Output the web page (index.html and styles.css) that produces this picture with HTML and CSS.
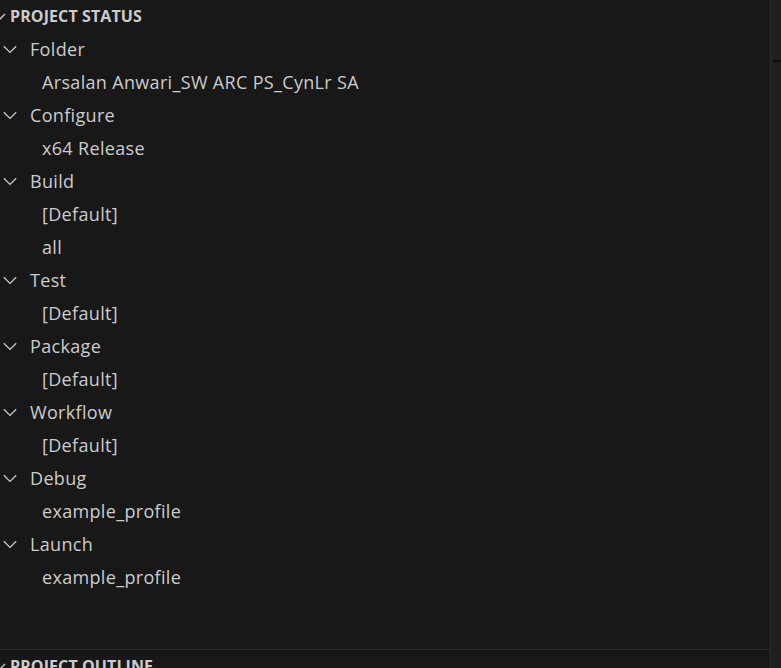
FILE: index.html
```html
<!DOCTYPE html>
<html>
<head>
<meta charset="utf-8">
<link rel="stylesheet" href="styles.css">
</head>
<body>
<div class="shell">
  <div class="sidebar">
    <div class="section">
      <div class="header">
        <svg class="hchev" width="16" height="16" viewBox="0 0 16 16"><path d="M3 6l5 5 5-5" fill="none" stroke="#cccccc" stroke-width="1.4"/></svg>
        <span>PROJECT STATUS</span>
      </div>
      <div class="tree">
        <div class="row parent"><svg class="chev" width="18" height="18" viewBox="0 0 16 16"><path d="M2.5 5.5l5.5 5.5 5.5-5.5" fill="none" stroke="#cccccc" stroke-width="1.1"/></svg><span>Folder</span></div>
        <div class="row leaf">Arsalan Anwari_SW ARC PS_CynLr SA</div>
        <div class="row parent"><svg class="chev" width="18" height="18" viewBox="0 0 16 16"><path d="M2.5 5.5l5.5 5.5 5.5-5.5" fill="none" stroke="#cccccc" stroke-width="1.1"/></svg><span>Configure</span></div>
        <div class="row leaf">x64 Release</div>
        <div class="row parent"><svg class="chev" width="18" height="18" viewBox="0 0 16 16"><path d="M2.5 5.5l5.5 5.5 5.5-5.5" fill="none" stroke="#cccccc" stroke-width="1.1"/></svg><span>Build</span></div>
        <div class="row leaf">[Default]</div>
        <div class="row leaf">all</div>
        <div class="row parent"><svg class="chev" width="18" height="18" viewBox="0 0 16 16"><path d="M2.5 5.5l5.5 5.5 5.5-5.5" fill="none" stroke="#cccccc" stroke-width="1.1"/></svg><span>Test</span></div>
        <div class="row leaf">[Default]</div>
        <div class="row parent"><svg class="chev" width="18" height="18" viewBox="0 0 16 16"><path d="M2.5 5.5l5.5 5.5 5.5-5.5" fill="none" stroke="#cccccc" stroke-width="1.1"/></svg><span>Package</span></div>
        <div class="row leaf">[Default]</div>
        <div class="row parent"><svg class="chev" width="18" height="18" viewBox="0 0 16 16"><path d="M2.5 5.5l5.5 5.5 5.5-5.5" fill="none" stroke="#cccccc" stroke-width="1.1"/></svg><span>Workflow</span></div>
        <div class="row leaf">[Default]</div>
        <div class="row parent"><svg class="chev" width="18" height="18" viewBox="0 0 16 16"><path d="M2.5 5.5l5.5 5.5 5.5-5.5" fill="none" stroke="#cccccc" stroke-width="1.1"/></svg><span>Debug</span></div>
        <div class="row leaf">example_profile</div>
        <div class="row parent"><svg class="chev" width="18" height="18" viewBox="0 0 16 16"><path d="M2.5 5.5l5.5 5.5 5.5-5.5" fill="none" stroke="#cccccc" stroke-width="1.1"/></svg><span>Launch</span></div>
        <div class="row leaf">example_profile</div>
      </div>
    </div>
    <div class="section2">
      <div class="header">
        <svg class="hchev" width="16" height="16" viewBox="0 0 16 16"><path d="M3 6l5 5 5-5" fill="none" stroke="#cccccc" stroke-width="1.4"/></svg>
        <span>PROJECT OUTLINE</span>
      </div>
    </div>
  </div>
  <div class="edge"><div class="shadow"></div></div>
</div>
</body>
</html>
```

FILE: styles.css
```css
html, body {
  margin: 0;
  padding: 0;
  background: #181818;
  overflow: hidden;
}
.shell {
  display: flex;
  width: 781px;
  height: 668px;
}
.sidebar {
  width: 770px;
  display: flex;
  flex-direction: column;
  font-family: "Open Sans", "Noto Sans", sans-serif;
  color: #cccccc;
}
.section {
  height: 649px;
  flex-shrink: 0;
}
.section2 {
  flex-shrink: 0;
  border-top: 1px solid #2b2b2b;
}
.header {
  box-sizing: border-box;
  height: 33px;
  padding-bottom: 2px;
  display: flex;
  align-items: center;
  font-size: 16px;
  font-weight: 700;
  letter-spacing: 0.1px;
  color: #cccccc;
  margin-left: -8px;
}
.hchev {
  width: 16px;
  height: 16px;
  margin-right: 2px;
}
.row {
  box-sizing: border-box;
  height: 33px;
  padding-bottom: 2px;
  display: flex;
  align-items: center;
  font-size: 18px;
  white-space: nowrap;
  letter-spacing: 0.33px;
}
.parent .chev {
  margin-left: 1px;
  margin-right: 11px;
}
.leaf {
  padding-left: 42px;
}
.edge {
  width: 10px;
  border-left: 1px solid #2b2b2b;
  background: #1f1f1f;
  position: relative;
}
.shadow {
  position: absolute;
  left: 2px;
  right: 0;
  top: 60px;
  height: 3px;
  background: linear-gradient(#0a0a0a, #1a1a1a);
}
```
